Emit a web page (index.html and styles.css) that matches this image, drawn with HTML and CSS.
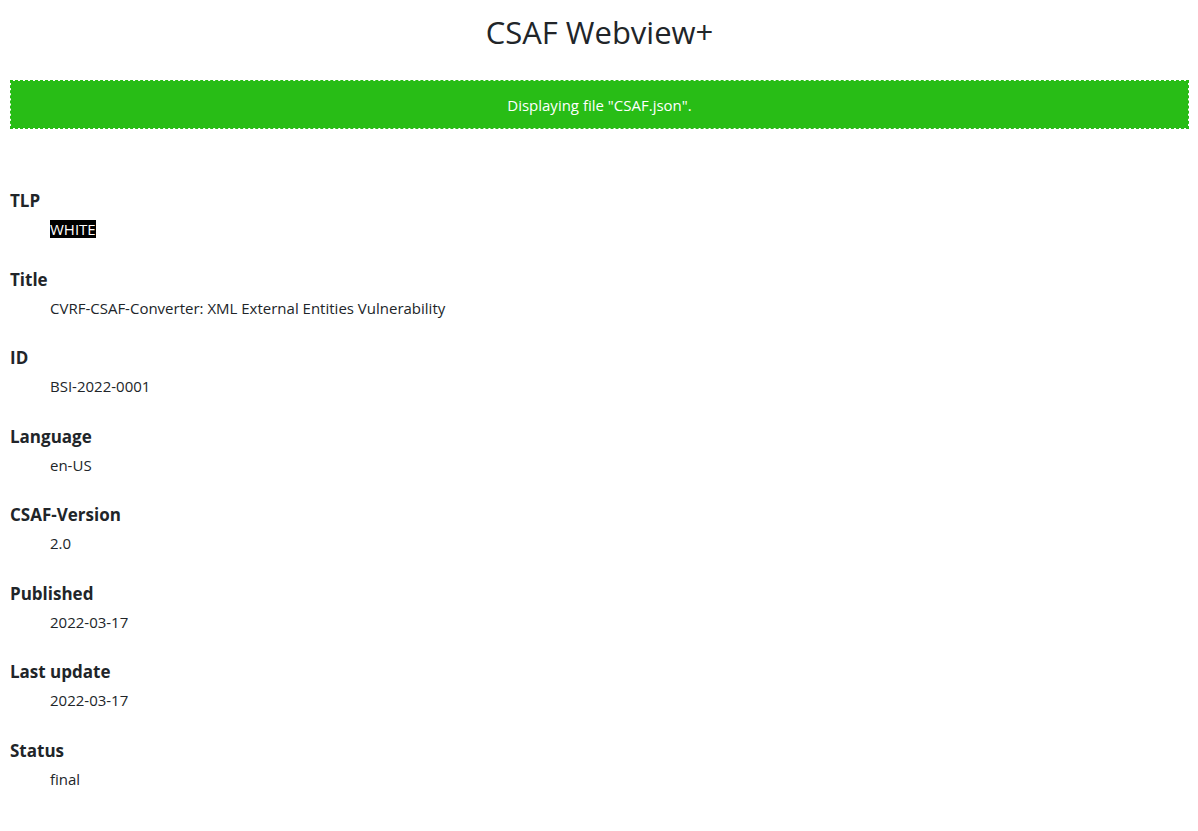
FILE: index.html
```html
<!DOCTYPE html>
<html lang="en">
<head>
<meta charset="utf-8">
<title>CSAF Webview+</title>
<link rel="stylesheet" href="styles.css">
</head>
<body>
<h1 class="app-title">CSAF Webview+</h1>
<div class="alert">Displaying file "CSAF.json".</div>
<dl class="meta">
  <dt>TLP</dt>
  <dd><span class="tlp">WHITE</span></dd>
  <dt>Title</dt>
  <dd>CVRF-CSAF-Converter: XML External Entities Vulnerability</dd>
  <dt>ID</dt>
  <dd>BSI-2022-0001</dd>
  <dt>Language</dt>
  <dd>en-US</dd>
  <dt>CSAF-Version</dt>
  <dd>2.0</dd>
  <dt>Published</dt>
  <dd>2022-03-17</dd>
  <dt>Last update</dt>
  <dd>2022-03-17</dd>
  <dt>Status</dt>
  <dd>final</dd>
</dl>
</body>
</html>
```
FILE: styles.css
```css
html, body {
  margin: 0;
  padding: 0;
  background: #fff;
}
body {
  padding: 0 9px 0 10px;
  font-family: "Open Sans", "Noto Sans", sans-serif;
  color: #212529;
  font-size: 15px;
}
.app-title {
  margin: 0;
  padding-top: 12px;
  height: 80px;
  box-sizing: border-box;
  text-align: center;
  font-weight: 400;
  font-size: 31px;
  line-height: 40px;
  color: #212529;
}
.alert {
  height: 49px;
  box-sizing: border-box;
  border: 1px dashed #28bd16;
  background: #28bd16;
  background-clip: padding-box;
  color: #fff;
  display: flex;
  align-items: center;
  justify-content: center;
  font-size: 15px;
}
.meta {
  margin: 0;
  padding-top: 60px;
}
.meta dt {
  font-weight: 700;
  font-size: 17px;
  line-height: 24px;
  height: 24px;
}
.meta dd {
  margin: 4px 0 26.57px 40px;
  line-height: 24px;
  height: 24px;
}
.tlp {
  background: #000;
  color: #fff;
  display: inline-block;
  line-height: 18px;
}
```
